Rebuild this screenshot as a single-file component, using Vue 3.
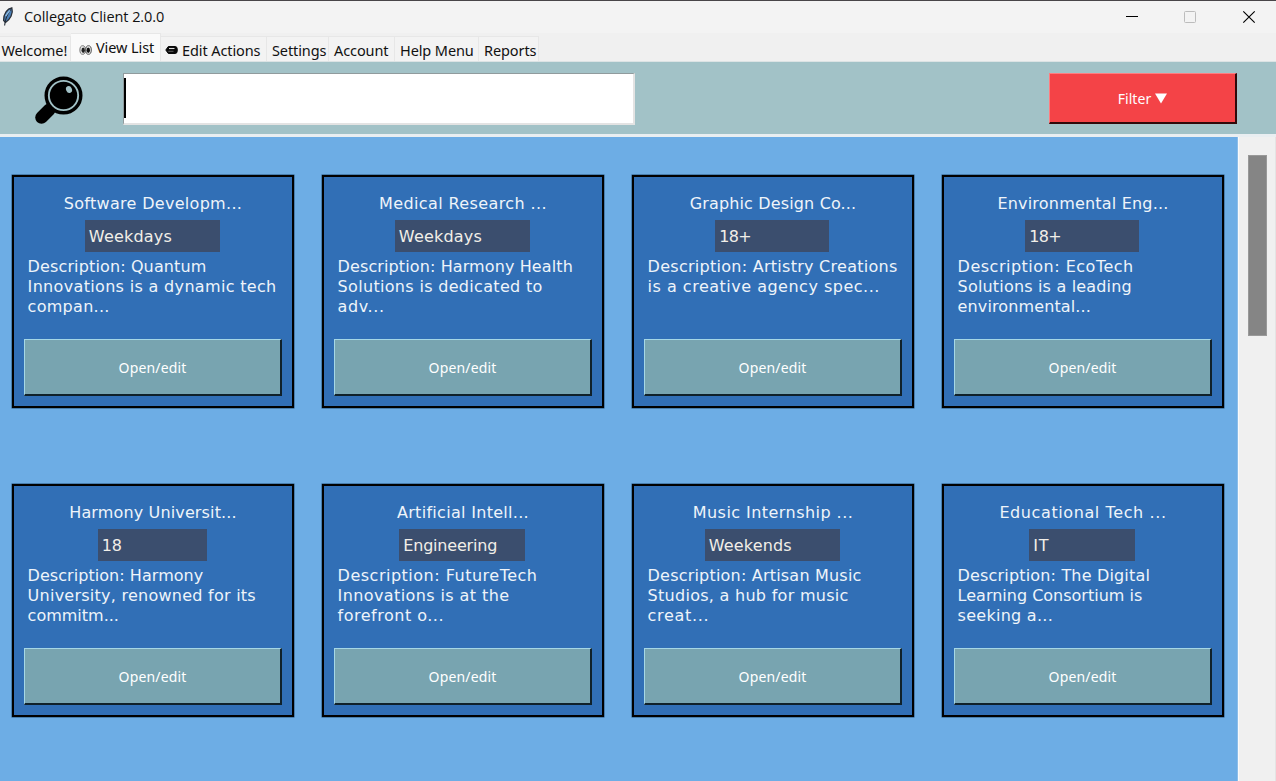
<script setup>
const tabs = [
  { label: 'Welcome!', width: 71 },
  { label: 'View List', width: 90, icon: 'eyes', active: true },
  { label: 'Edit Actions', width: 106, icon: 'pencil' },
  { label: 'Settings', width: 62 },
  { label: 'Account', width: 66 },
  { label: 'Help Menu', width: 84 },
  { label: 'Reports', width: 60 },
]
// Each text run is [content, letter spacing in px].
const cards = [
  { title: ['Software Developm...', 0.3], tag: ['Weekdays', 0.2], tagWidth: 135, lines: [['Description: Quantum', 0.13], ['Innovations is a dynamic tech', 0.33], ['compan...', 0.28]] },
  { title: ['Medical Research ...', 0.4], tag: ['Weekdays', 0.2], tagWidth: 135, lines: [['Description: Harmony Health', 0.11], ['Solutions is dedicated to', 0.32], ['adv...', 0.6]] },
  { title: ['Graphic Design Co...', 0.15], tag: ['18+', -0.7], tagWidth: 114, lines: [['Description: Artistry Creations', 0.27], ['is a creative agency spec...', 0.5]] },
  { title: ['Environmental Eng...', 0.2], tag: ['18+', -0.7], tagWidth: 114, lines: [['Description: EcoTech', 0.5], ['Solutions is a leading', 0.18], ['environmental...', 0.12]] },
  { title: ['Harmony Universit...', 0.14], tag: ['18', -0.2], tagWidth: 109, lines: [['Description: Harmony', 0.05], ['University, renowned for its', 0.25], ['commitm...', 0]] },
  { title: ['Artificial Intell...', 0.3], tag: ['Engineering', -0.2], tagWidth: 126, lines: [['Description: FutureTech', 0.5], ['Innovations is at the', 0.4], ['forefront o...', 0.5]] },
  { title: ['Music Internship ...', 0.45], tag: ['Weekends', 0.15], tagWidth: 135, lines: [['Description: Artisan Music', 0.2], ['Studios, a hub for music', 0.28], ['creat...', 0.7]] },
  { title: ['Educational Tech ...', 0.6], tag: ['IT', 0.8], tagWidth: 106, lines: [['Description: The Digital', 0.17], ['Learning Consortium is', 0], ['seeking a...', 0.27]] },
]
const track = (run) => ({ letterSpacing: run[1] + 'px' })
</script>

<template>
  <div class="window">
    <header class="titlebar">
      <svg class="feather" width="16" height="22" viewBox="0 0 16 22">
        <path d="M11.800 1.800C7.500 2.500 3.400 7.500 3.600 14.500L5.500 16.500C10 13.500 13.600 7.500 11.800 1.800Z" fill="#4b80b8" stroke="#2b3038" stroke-width="1.300" />
        <path d="M10.800 3.500C8 7 5.400 12 4.600 19.500" fill="none" stroke="#222b36" stroke-width="1.100" />
        <path d="M9.800 4.300 5.600 10" stroke="#8fbce4" stroke-width="1.300" />
      </svg>
      <span class="app-title">Collegato Client 2.0.0</span>
      <svg class="controls" width="150" height="33" viewBox="0 0 150 33">
        <path d="M0 16.500H12" stroke="#000" />
        <rect x="58.500" y="11.500" width="11" height="11" rx="1" fill="none" stroke="#bcbcbc" />
        <path d="M117.300 11.300 128.700 22.700M128.700 11.300 117.300 22.700" stroke="#000" stroke-width="1.150" />
      </svg>
    </header>

    <nav class="tabs">
      <div v-for="t in tabs" :key="t.label" class="tab" :class="{ active: t.active }" :style="{ width: t.width + 'px' }">
        <svg v-if="t.icon === 'eyes'" class="eyes" width="13" height="12" viewBox="0 0 13 12">
          <ellipse cx="3.700" cy="6" rx="2.800" ry="4.300" fill="#e8e8e8" stroke="#777" />
          <ellipse cx="9.500" cy="6" rx="2.800" ry="4.300" fill="#e8e8e8" stroke="#555" />
          <ellipse cx="4.200" cy="6.300" rx="1.700" ry="2.800" fill="#222" />
          <ellipse cx="9.300" cy="6.300" rx="1.700" ry="2.800" fill="#111" />
        </svg>
        <svg v-if="t.icon === 'pencil'" class="pencil" width="13" height="10" viewBox="0 0 13 10">
          <path d="M.8 5 3.300 1.500H10.500Q12.300 1.500 12.300 5T10.500 8.500H3.300Z" fill="#0a0a0a" stroke="#0a0a0a" stroke-linejoin="round" />
          <path d="M4 3.500H9.500" stroke="#ddd" stroke-width="1.100" />
          <path d="M3.300 6.300H8.500" stroke="#777" stroke-width=".8" />
        </svg>
        <span>{{ t.label }}</span>
      </div>
    </nav>

    <section class="toolbar">
      <svg class="magnifier" width="50" height="50" viewBox="0 0 50 50">
        <path d="M15.500 33.500 7.500 41.500" stroke="#000" stroke-width="12.500" stroke-linecap="round" />
        <circle cx="29.500" cy="19.500" r="17.300" fill="#a2c2c7" stroke="#000" stroke-width="3.400" />
        <circle cx="29.500" cy="19.500" r="13.700" />
        <ellipse cx="35" cy="13.500" rx="2.900" ry="3.500" fill="#a2c2c7" transform="rotate(-25 35 13.500)" />
      </svg>
      <div class="search"><i class="caret"></i></div>
      <button class="filter"><span>Filter</span><svg width="12" height="11" viewBox="0 0 12 11"><path d="M0 .5H12L6 10.500Z" fill="#fff" /></svg></button>
    </section>

    <main class="body">
      <div class="grid">
        <article v-for="c in cards" :key="c.title[0]" class="card">
          <h3 :style="track(c.title)">{{ c.title[0] }}</h3>
          <div class="tag" :style="{ width: c.tagWidth + 'px' }"><span :style="track(c.tag)">{{ c.tag[0] }}</span></div>
          <p><span v-for="l in c.lines" :key="l[0]" :style="track(l)">{{ l[0] }}</span></p>
          <button class="open"><span>Open/edit</span></button>
        </article>
      </div>
      <aside class="scroll"><div class="thumb"></div></aside>
    </main>
  </div>
</template>

<style>
body { margin: 0; overflow: hidden; }
</style>

<style scoped>
* { box-sizing: border-box; }
.window { width: 1276px; height: 781px; overflow: hidden; display: flex; flex-direction: column; background: #f0f0f0; font-family: "Noto Sans", "Open Sans", sans-serif; color: #111; }
svg { display: block; flex: none; }
.titlebar { height: 33px; flex: none; display: flex; align-items: center; background: #f3f3f3; border-top: 1px solid #484548; }
.feather { margin: -1px 0 0 0; }
.app-title { margin-left: 8px; font: 14.5px/20px "Open Sans", sans-serif; letter-spacing: -.07px; white-space: nowrap; }
.controls { margin: -1px 0 0 auto; }
.tabs { height: 29px; flex: none; display: flex; align-items: flex-end; border-bottom: 1px solid #dce3e4; }
.tab { height: 25px; flex: none; display: flex; align-items: center; padding: 1px 0 0 5px; background: #f3f3f3; border: solid #e7e7e7; border-width: 1px 1px 0 0; font-size: 14.5px; letter-spacing: -.1px; white-space: nowrap; }
.tab:first-child { padding-left: 1.5px; }
.tab.active { height: 28px; padding: 0 0 2px 8px; background: #fafafa; }
.tab:nth-child(3) { padding-left: 4px; }
.eyes { margin: 6px 4px 0 0; }
.pencil { margin-right: 4px; }
.toolbar { height: 72px; flex: none; display: flex; align-items: flex-start; background: #a2c2c7; }
.magnifier { margin: 14px 0 0 33.500px; }
.search { width: 512px; height: 52px; margin: 11px 0 0 39.500px; padding: 4px 0 0; background: #fff; border: 1px solid #909b9d; border-right: 2px solid #e3e3e3; border-bottom: 2px solid #e3e3e3; }
.caret { display: block; width: 2px; height: 40px; background: #000; }
.filter { width: 188px; height: 51px; margin: 11px 39px 0 auto; padding: 1px 0 0; display: flex; align-items: center; justify-content: center; gap: 4px; background: #f44347; border: solid; border-width: 1px 2px 2px 1px; border-color: #ff7d80 #30090a #30090a #ff7d80; color: #fff; font: 14px/20px "Noto Sans", sans-serif; letter-spacing: .05px; }
.body { height: 647px; flex: none; display: flex; border-top: 3px solid #e9eef1; }
.grid { width: 1238px; height: 644px; flex: none; display: grid; grid-template-columns: repeat(4, 282px); grid-template-rows: repeat(2, 233px); gap: 76px 28px; padding: 38px 0 0 12px; background: #6dade5; border-right: 1px solid #8bbde9; }
.card { display: flex; flex-direction: column; align-items: center; border: 2px solid #000; background: #316fb6; box-shadow: 0 0 0 .5px #245078; color: #eef4fa; font-family: "DejaVu Sans", sans-serif; font-size: 16px; }
h3 { margin: 17px 0 0; height: 20px; font: inherit; line-height: 20px; white-space: nowrap; }
.tag { height: 32px; margin: 6px 1.400px 0 0; padding-left: 4px; background: #3b4e6e; line-height: 34px; color: #f2eee8; white-space: nowrap; }
p { align-self: stretch; height: 60px; margin: 5px 0 0 13.600px; line-height: 20px; white-space: nowrap; }
p span { display: block; }
.open { width: 258px; height: 57px; margin-top: 22px; padding: 2px 0 0; flex: none; background: #78a4b0; border: solid; border-width: 1px 2px 2px 1px; border-color: #a5d7e6 #10212a #10212a #a5d7e6; color: #fff; font: 14px/20px "Noto Sans", sans-serif; letter-spacing: .15px; }
.scroll { flex: 1; border-left: 1px solid #fafafa; border-right: 1px solid #e4e4e4; }
.thumb { width: 19px; height: 181px; margin: 18px 0 0 9px; background: #858585; border: 1px solid #999; }
</style>
